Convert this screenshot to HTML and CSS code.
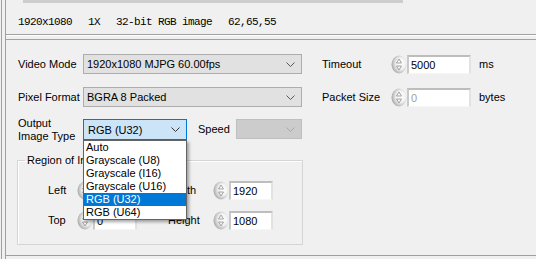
FILE: index.html
```html
<!DOCTYPE html>
<html>
<head>
<meta charset="utf-8">
<link rel="stylesheet" href="styles.css">
</head>
<body>
<svg class="defs" width="0" height="0" aria-hidden="true">
  <defs>
    <radialGradient id="spinfill" cx="62%" cy="45%" r="62%">
      <stop offset="0" stop-color="#ffffff"/>
      <stop offset="0.5" stop-color="#f2f2f2"/>
      <stop offset="1" stop-color="#a9a9a9"/>
    </radialGradient>
  </defs>
</svg>
<div class="window">
  <div class="inner">
    <div class="imgbar"></div>
    <div class="status">
      <span>1920x1080</span><span>1X</span><span>32-bit RGB image</span><span>62,65,55</span>
    </div>
    <div class="panel">
      <div class="row">
        <span class="lbl">Video Mode</span>
        <div class="combo w-video"><span class="ctext">1920x1080 MJPG 60.00fps</span><svg class="chev" width="9" height="5" viewBox="0 0 9 5"><path d="M0.5 0.5 L4.5 4.5 L8.5 0.5"/></svg></div>
        <span class="rlbl">Timeout</span>
        <svg class="spin" width="16" height="19" viewBox="0 0 16 19"><ellipse cx="8" cy="9.5" rx="7.5" ry="9" fill="url(#spinfill)"/><path d="M5.5 8 L8 4 L10.5 8 Z M5.5 11 L8 15 L10.5 11 Z"/></svg>
        <div class="num w-num">5000</div>
        <span class="unit">ms</span>
      </div>
      <div class="row">
        <span class="lbl">Pixel Format</span>
        <div class="combo w-video"><span class="ctext">BGRA 8 Packed</span><svg class="chev" width="9" height="5" viewBox="0 0 9 5"><path d="M0.5 0.5 L4.5 4.5 L8.5 0.5"/></svg></div>
        <span class="rlbl">Packet Size</span>
        <svg class="spin" width="16" height="19" viewBox="0 0 16 19"><ellipse cx="8" cy="9.5" rx="7.5" ry="9" fill="url(#spinfill)"/><path d="M5.5 8 L8 4 L10.5 8 Z M5.5 11 L8 15 L10.5 11 Z"/></svg>
        <div class="num w-num disabled">0</div>
        <span class="unit">bytes</span>
      </div>
      <div class="row row3">
        <span class="lbl lbl2">Output<br>Image Type</span>
        <div class="dropwrap">
          <div class="combo w-out focused"><span class="ctext">RGB (U32)</span><svg class="chev" width="9" height="5" viewBox="0 0 9 5"><path d="M0.5 0.5 L4.5 4.5 L8.5 0.5"/></svg></div>
          <ul class="droplist">
            <li>Auto</li>
            <li>Grayscale (U8)</li>
            <li>Grayscale (I16)</li>
            <li>Grayscale (U16)</li>
            <li class="sel">RGB (U32)</li>
            <li>RGB (U64)</li>
          </ul>
        </div>
        <span class="slbl">Speed</span>
        <div class="combo w-speed off"><span class="ctext"></span><svg class="chev" width="9" height="5" viewBox="0 0 9 5"><path d="M0.5 0.5 L4.5 4.5 L8.5 0.5"/></svg></div>
      </div>
      <fieldset class="group">
        <legend>Region of Interest</legend>
        <div class="grow">
          <span class="glbl">Left</span>
          <svg class="spin" width="16" height="19" viewBox="0 0 16 19"><ellipse cx="8" cy="9.5" rx="7.5" ry="9" fill="url(#spinfill)"/><path d="M5.5 8 L8 4 L10.5 8 Z M5.5 11 L8 15 L10.5 11 Z"/></svg>
          <div class="num w-small">0</div>
          <span class="glbl2">Width</span>
          <svg class="spin" width="16" height="19" viewBox="0 0 16 19"><ellipse cx="8" cy="9.5" rx="7.5" ry="9" fill="url(#spinfill)"/><path d="M5.5 8 L8 4 L10.5 8 Z M5.5 11 L8 15 L10.5 11 Z"/></svg>
          <div class="num w-small">1920</div>
        </div>
        <div class="grow">
          <span class="glbl">Top</span>
          <svg class="spin" width="16" height="19" viewBox="0 0 16 19"><ellipse cx="8" cy="9.5" rx="7.5" ry="9" fill="url(#spinfill)"/><path d="M5.5 8 L8 4 L10.5 8 Z M5.5 11 L8 15 L10.5 11 Z"/></svg>
          <div class="num w-small">0</div>
          <span class="glbl2">Height</span>
          <svg class="spin" width="16" height="19" viewBox="0 0 16 19"><ellipse cx="8" cy="9.5" rx="7.5" ry="9" fill="url(#spinfill)"/><path d="M5.5 8 L8 4 L10.5 8 Z M5.5 11 L8 15 L10.5 11 Z"/></svg>
          <div class="num w-small">1080</div>
        </div>
      </fieldset>
    </div>
  </div>
</div>
</body>
</html>
```
FILE: styles.css
```css
* { box-sizing: border-box; }
html, body {
  margin: 0;
  padding: 0;
  background: #f0f0f0;
  width: 536px;
  height: 259px;
  overflow: hidden;
}
body {
  font-family: "Liberation Sans", Arial, sans-serif;
  font-size: 11px;
  color: #000;
}
.defs { position: absolute; width: 0; height: 0; }

.window {
  height: 259px;
  margin-left: 1px;
  border-left: 1px solid #a0a0a0;
  padding-left: 3px;
}
.inner {
  height: 259px;
  border-left: 1px solid #a0a0a0;
}
.imgbar {
  margin-left: 17px;
  width: 380px;
  height: 3px;
  background: #cdcdcd;
}
.status {
  height: 32px;
  padding: 13px 0 0 12px;
  border-bottom: 1px solid #a0a0a0;
  box-shadow: 0 1px 0 #ffffff;
  display: flex;
  gap: 16px;
  font-family: "Liberation Mono", "Courier New", monospace;
  font-size: 11px;
  letter-spacing: -0.6px;
  line-height: 12px;
  white-space: pre;
}

.panel {
  margin-top: 4px;
  height: 217px;
  border-top: 1px solid #a0a0a0;
  border-bottom: 1px solid #a0a0a0;
  padding: 14px 0 0 12px;
}

.row {
  display: flex;
  align-items: center;
  height: 20px;
  margin-bottom: 13px;
}
.row3 {
  align-items: flex-start;
  height: 24px;
  margin-bottom: 0;
  margin-top: -1px;
}
.lbl { width: 65px; line-height: 13px; }
.lbl2 { margin-top: -2px; }
.rlbl { margin-left: 20px; width: 69px; }
.slbl { margin-left: 11px; width: 38px; line-height: 21px; }
.unit { margin-left: 8px; }

.combo {
  height: 20px;
  border: 1px solid #adadad;
  background: #e1e1e1;
  display: flex;
  align-items: center;
  justify-content: space-between;
  padding: 0 6px 0 3px;
}
.combo .chev path { fill: none; stroke: #5a5a5a; stroke-width: 1; }
.w-video { width: 219px; }
.w-out { width: 104px; height: 21px; }
.w-speed { width: 66px; }
.combo.focused {
  border-color: #0078d7;
  background: #cce4f7;
  padding-left: 4px;
}
.combo.focused .chev path { stroke: #333; }
.combo.off {
  background: #cccccc;
  border-color: #bfbfbf;
}
.combo.off .chev path { stroke: #a8a8a8; }

.spin { display: block; flex: none; }
.spin path { fill: none; stroke: #9a9a9a; stroke-width: 0.9; stroke-linejoin: round; }

.num {
  height: 19px;
  background: #ffffff;
  border-top: 2px solid #bdbdbd;
  border-left: 2px solid #c9c9c9;
  border-right: 2px solid #e2e2e2;
  border-bottom: 1px solid #f6f6f6;
  padding-left: 2px;
  line-height: 16px;
}
.w-num { width: 64px; }
.w-small { width: 44px; }
.num.disabled { color: #a0a0a0; }

.dropwrap { position: relative; }
.droplist {
  position: absolute;
  left: 0;
  top: 21px;
  width: 104px;
  margin: 0;
  padding: 0;
  list-style: none;
  background: #ffffff;
  border: 1px solid #646464;
  box-shadow: 2px 2px 3px rgba(0, 0, 0, 0.35);
  z-index: 5;
}
.droplist li {
  height: 13px;
  line-height: 13px;
  padding-left: 2px;
  white-space: nowrap;
}
.droplist li.sel {
  background: #0078d7;
  color: #ffffff;
}

.group {
  margin: 11px 0 0 -1px;
  width: 286px;
  height: 91px;
  border: 1px solid #d5d5d5;
  box-shadow: inset 1px 1px 0 #ffffff;
  padding: 13px 0 0 30px;
  min-width: 0;
}
.group legend {
  padding: 0 2px;
  margin-left: -23px;
  line-height: 13px;
}
.grow {
  display: flex;
  align-items: center;
  height: 20px;
  margin-bottom: 10px;
}
.glbl { width: 29px; }
.glbl2 { margin-left: 31px; width: 45px; }
```
